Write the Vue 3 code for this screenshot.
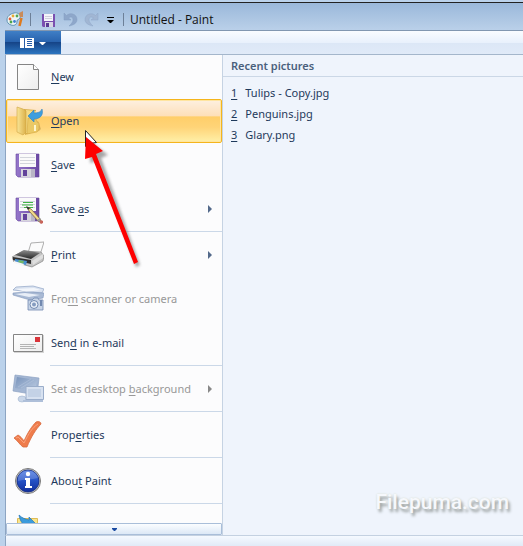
<script setup>
import { ref } from 'vue'

const current = ref('open')

const items = [
  { id: 'new', label: ['', 'N', 'ew'] },
  { id: 'open', label: ['', 'O', 'pen'] },
  { id: 'save', label: ['', 'S', 'ave'] },
  { id: 'saveas', label: ['Save ', 'a', 's'], more: true, line: true },
  { id: 'print', label: ['', 'P', 'rint'], more: true },
  { id: 'scanner', label: ['Fro', 'm', ' scanner or camera'], disabled: true },
  { id: 'email', label: ['Sen', 'd', ' in e-mail'], line: true },
  { id: 'desktop', label: ['Set as desktop ', 'b', 'ackground'], more: true, disabled: true, line: true },
  { id: 'properties', label: ['Prop', 'e', 'rties'], line: true },
  { id: 'about', label: ['Abou', 't', ' Paint'], line: true },
  { id: 'exit', label: ['', '', ''] },
]

const recent = ['Tulips - Copy.jpg', 'Penguins.jpg', 'Glary.png']
</script>

<template>
  <div class="window">
    <header class="titlebar">
      <svg class="logo" width="18" height="18" viewBox="0 0 18 18">
        <path d="M1 10C1 6 4 4 8 3c4-1 7 2 6 5-1 2-3 1-3 3 0 4-3 5-6 4-3-1-4-3-4-5z" fill="#eef5f8" stroke="#5f93b0" />
        <circle cx="4" cy="9" r="1.400" fill="#e2603a" /><circle cx="7" cy="6" r="1.400" fill="#e8ac32" />
        <circle cx="11" cy="6" r="1.400" fill="#54a954" /><circle cx="5" cy="12" r="1.400" fill="#4aa64a" />
        <circle cx="8.500" cy="11.500" r="1.400" fill="#3f7fd0" />
        <path d="M15.500 8l-2 8" stroke="#df7a1e" stroke-width="2.500" /><path d="M14 7l-1-4 4-2v6z" fill="#c98b5a" />
      </svg>
      <span class="bar"></span>
      <button class="tool" aria-label="Save">
        <svg width="16" height="16" viewBox="0 0 16 16">
          <path d="M2 2h13v13H3l-1-1z" fill="#7a50b0" /><path d="M4 2h9v7H4z" fill="#f4f4fa" />
          <path d="M5 4.500h7M5 6.500h7" stroke="#cfcfdc" />
          <path d="M5 10h8v5H5z" fill="#d9d6e4" /><path d="M6 11h3v4H6z" fill="#5b3b94" />
        </svg>
      </button>
      <button class="tool" aria-label="Undo">
        <svg width="16" height="16" viewBox="0 0 16 16">
          <path d="M2 1v7h7L6.500 6C9 4 11 5 11 8c0 2-2 4-4 6 5-1 8-3 8-6.500C15 2 8 0 4.500 3.500z" fill="#8ea7ca" stroke="#829cc1" stroke-width=".5" />
        </svg>
      </button>
      <button class="tool" aria-label="Redo">
        <svg width="16" height="16" viewBox="0 0 16 16">
          <path d="M14 1v7H7l2.500-2C7 4 5 5 5 8c0 2 2 4 4 6-5-1-8-3-8-6.500C1 2 8 0 11.500 3.500z" fill="#a1b6d3" stroke="#8fa7c8" stroke-width=".5" />
        </svg>
      </button>
      <button class="tool customize" aria-label="Customize toolbar">
        <svg width="8" height="8" viewBox="0 0 8 8"><path d="M0 1h7v1H0z" /><path d="M0 4h7L4 7H3z" /></svg>
      </button>
      <span class="bar"></span>
      <h1>Untitled - Paint</h1>
    </header>

    <div class="tabs">
      <button class="app-button" aria-label="Paint menu">
        <svg width="28" height="12" viewBox="0 0 28 12">
          <path d="M1 1h14v10H1z" fill="#fff" /><path d="M5 1h1v10H5z" fill="#275ca8" />
          <path d="M8 3h5M8 5h5M8 7h5M8 9h5" stroke="#275ca8" transform="translate(0 -.5)" />
          <path d="M20 5h7l-3 3h-1z" fill="#fff" />
        </svg>
      </button>
    </div>

    <main class="panel">
      <nav class="menu">
        <div class="items">
          <button
            v-for="item in items"
            :key="item.id"
            class="item"
            :class="{ active: current === item.id, line: item.line }"
            :disabled="item.disabled"
            @mouseenter="current = item.id"
          >
            <svg class="icon" width="32" height="32" viewBox="0 0 32 32">
              <defs>
                <linearGradient id="violet" x2="1"><stop stop-color="#9577cb" /><stop offset="1" stop-color="#6b48a3" /></linearGradient>
                <linearGradient id="folder" x2="1"><stop stop-color="#f9e596" /><stop offset="1" stop-color="#dcb14a" /></linearGradient>
                <linearGradient id="paper" x2="1" y2="1"><stop stop-color="#fff" /><stop offset="1" stop-color="#ededed" /></linearGradient>
                <linearGradient id="info" y2="1" x2="0"><stop stop-color="#4c7ae4" /><stop offset=".5" stop-color="#2450c4" /><stop offset="1" stop-color="#122f9c" /></linearGradient>
                <linearGradient id="steel" x2="1" y2="1"><stop stop-color="#7893bb" /><stop offset="1" stop-color="#c0cfe4" /></linearGradient>
                <linearGradient id="dark" x2="0" y2="1"><stop stop-color="#8e8e8e" /><stop offset="1" stop-color="#272727" /></linearGradient>
              </defs>

              <g v-if="item.id === 'new'">
                <path d="M5.500 3.500h16l5 5v20h-21z" fill="url(#paper)" stroke="#858585" />
                <path d="M21.500 3.500v5h5" fill="#fff" stroke="#858585" />
              </g>

              <g v-else-if="item.id === 'open'">
                <path d="M15 29l12-3 2-2-3-8-10 8z" fill="#8a6a20" opacity=".3" />
                <path d="M12 4l12 1v21l-11 4z" fill="#d9b04d" />
                <path d="M14 5l10 1v20l-10 2z" fill="#f5da83" />
                <path d="M5 2l6 2 3 2v21l-3 3-6-3z" fill="url(#folder)" stroke="#cfa443" stroke-width=".6" />
                <path d="M16 13l8 1 1 3 2 1v6l-2 3-10 2z" fill="#ebc966" stroke="#d0a23c" stroke-width=".5" />
                <path d="M22 20h2v6h-2z" fill="#fff6cc" />
                <path d="M16 11l6-6v3c4 0 7-1 8-4 2 7-3 10-8 10v3z" fill="#3d9ede" stroke="#2d80bf" stroke-width=".6" />
              </g>

              <g v-else-if="item.id === 'save' || item.id === 'saveas'">
                <path d="M4 5h23v23H6l-2-2z" fill="url(#violet)" stroke="#67469c" stroke-width=".6" />
                <path d="M7 5h17v13H7z" fill="#fafafa" />
                <path d="M8 8.500h15M8 11.500h15M8 14.500h15" stroke="#d3d5dc" />
                <path d="M9 20h14v8H9z" fill="#d7d5dd" /><path d="M11 21h4v6h-4z" fill="#63439b" /><path d="M19 20h4v8h-4z" fill="#b9b5c6" />
                <g v-if="item.id === 'saveas'">
                  <path d="M11 9.500h10M10 12h11M12 14.500h9" stroke="#3fb544" />
                  <path d="M15 14l4 2 10 11-2 2-10-11z" fill="#f2d98a" stroke="#745c33" stroke-width=".7" />
                  <path d="M14 13l2 4 2-2z" fill="#333" />
                  <path d="M27 29l2-2 2 1v2l-2 1z" fill="#c8655b" /><path d="M25 27l3-2 1 1-2 3z" fill="#999" />
                </g>
              </g>

              <g v-else-if="item.id === 'print'">
                <path d="M16 14l3-10 13-1-4 13z" fill="#fbfbfb" stroke="#9b9b9b" stroke-width=".8" />
                <path d="M0 18l11-6 18 1 3 4-1 5-11 6L2 23z" fill="#c4c4c4" stroke="#777" stroke-width=".6" />
                <path d="M3 16l9-5 16 3-9 6z" fill="url(#dark)" />
                <path d="M1 18l18 3v4L1 21z" fill="#303030" />
                <path d="M20 22l11-7v4l-10 7z" fill="#dedede" />
                <path d="M3 20l12 2-1 4-11-3z" fill="#4a91d2" /><path d="M7 21l5 1-1 3-5-2z" fill="#70b767" />
                <path d="M2 22l10 3-1 2-9-3z" fill="#f7f7f7" />
              </g>

              <g v-else-if="item.id === 'scanner'">
                <path d="M1 7l3-3 17-1 11 3-2 4z" fill="#d9e2f0" stroke="#91a5c5" stroke-width=".7" />
                <path d="M4 6l18-1 7 2-15 2z" fill="#f3f6fb" />
                <path d="M1 10l12-1 19 1-1 5-13 2L1 12z" fill="#a8b9d4" stroke="#8399bd" stroke-width=".6" />
                <path d="M3 11l10-1 15 2-11 2z" fill="#e8eef7" />
                <path d="M16 17h4l2-2h4l1 2h4v10H16z" fill="#c7d4e7" stroke="#7189b0" stroke-width=".8" />
                <circle cx="22" cy="21.500" r="4" fill="#e9eff7" stroke="#7189b0" /><circle cx="22" cy="21.500" r="2" fill="#849bbf" />
                <path d="M28 17h2v6h-2z" fill="#7289b0" />
              </g>

              <g v-else-if="item.id === 'email'">
                <path d="M2 8h30v18H2z" fill="#d5d5d5" />
                <path d="M1.500 7.500h29v17h-29z" fill="url(#paper)" stroke="#858585" />
                <path d="M23 10h5v5h-5z" fill="#d9343a" />
                <path d="M8 17.500h16M8 19.500h14M8 21.500h16" stroke="#b4b4b4" />
              </g>

              <g v-else-if="item.id === 'desktop'">
                <path d="M3 2l24 3-2 17-24-4z" fill="#a3b6d3" stroke="#8ca2c3" stroke-width=".7" />
                <path d="M5 4l20 3-2 12-20-4z" fill="url(#steel)" />
                <path d="M6 14l13-8M9 15l13-8" stroke="#b8c8df" opacity=".5" />
                <ellipse cx="10" cy="26" rx="4" ry="3" fill="#cad7e9" stroke="#a0b3cf" stroke-width=".6" />
                <path d="M14 13.500h17.500v13H14z" fill="#d7e1f0" stroke="#9aadca" />
                <path d="M16 16h13v8H16z" fill="#c4d2e6" />
                <path d="M11 27h20v2H11z" fill="#aebfd9" />
              </g>

              <g v-else-if="item.id === 'properties'">
                <path d="M2 19l4-3c2 1 4 3 6 6C16 13 20 7 24 3c3-1 5 0 5 2-5 5-10 13-14 23h-4C8 26 6 22 2 19z" fill="#ef7c4c" stroke="#d76a3e" stroke-width=".8" />
                <path d="M4 19l2-1 6 6C17 14 20 9 26 5" fill="none" stroke="#f9a27c" />
              </g>

              <g v-else-if="item.id === 'about'">
                <circle cx="16" cy="16" r="12.500" fill="#c8c8c8" stroke="#7b7b7b" />
                <circle cx="16" cy="16" r="11" fill="url(#info)" stroke="#152c83" stroke-width=".8" />
                <path d="M6 13C8 3 24 3 26 13c-6 2-14 1-20 3z" fill="#fff" opacity=".18" />
                <circle cx="16" cy="9" r="2.200" fill="#fff" />
                <path d="M13 13h5v8h2v2h-7v-2h1v-6h-1z" fill="#fff" />
              </g>

              <g v-else>
                <path d="M5.500 7.500h20v23h-20z" fill="#f8e48c" stroke="#dfbd55" />
                <path d="M7 4c3 3 6 4 10 5V6l7 7-8 5v-3C11 15 8 10 7 4z" fill="#3b9bdc" stroke="#2374b7" stroke-width=".7" />
              </g>
            </svg>
            <span class="text">{{ item.label[0] }}<u>{{ item.label[1] }}</u>{{ item.label[2] }}</span>
            <svg v-if="item.more" class="more" width="4" height="8" viewBox="0 0 4 8"><path d="M0 0l4 4-4 4z" fill="currentColor" /></svg>
          </button>
        </div>
        <button class="scroll-down" aria-label="More commands">
          <svg width="5" height="3" viewBox="0 0 5 3"><path d="M0 0h5v1L3 3H2L0 1z" fill="#1949a0" /></svg>
        </button>
      </nav>

      <section class="recent">
        <h2>Recent pictures</h2>
        <ol>
          <li v-for="(file, i) in recent" :key="file">
            <a href="#"><u>{{ i + 1 }}</u><span>{{ file }}</span></a>
          </li>
        </ol>
      </section>
    </main>

    <footer class="ribbon-edge"></footer>

    <svg class="pointer" width="70" height="145" viewBox="0 0 70 145">
      <defs><filter id="soft" x="-30%" width="160%"><feGaussianBlur stdDeviation="1.500" /></filter></defs>
      <g transform="translate(5 4)" fill="#777" opacity=".65" filter="url(#soft)">
        <path d="M5 8l17 13-7 3 39 107-4 2-39-106-7 2z" />
      </g>
      <path d="M4.500.500v16l4-3 7-1z" fill="#fff" stroke="#222" />
      <path d="M5 7l17 14-7 3 42 108-4 2L11 27l-7 2z" fill="#fe0000" />
    </svg>
    <span class="watermark">Filepuma.com</span>
  </div>
</template>

<style>
body {
  margin: 0;
}
</style>

<style scoped>
* {
  box-sizing: border-box;
}

.window {
  position: relative;
  display: flex;
  flex-direction: column;
  height: 100vh;
  padding-top: 2px;
  overflow: hidden;
  background: #bbd2eb;
  font: 11px/16px "Noto Sans", "Open Sans", sans-serif;
  color: #1e395b;
}

button {
  padding: 0;
  border: 0;
  background: none;
  font: inherit;
  color: inherit;
}

svg {
  display: block;
  flex: none;
}

.titlebar {
  display: flex;
  align-items: center;
  height: 28px;
  flex: none;
  padding: 6px 0 0 6px;
  border-top: 1px solid #222;
  background: linear-gradient(#9ab8da, #bad0e9);
}

.logo {
  margin-bottom: 2px;
}

.bar {
  width: 1px;
  height: 13px;
  margin: 0 9px 0 6px;
  background: #6d8098;
}

.tool {
  margin-right: 6px;
}

.customize {
  margin: 0 2px 0 1px;
}

.customize + .bar {
  margin-right: 6px;
}

h1 {
  margin: 0;
  padding-top: 1px;
  font: 12px/16px "Open Sans", "Noto Sans", sans-serif;
  color: #111;
}

.tabs {
  height: 25px;
  flex: none;
  margin-left: 5px;
  border-top: 1px solid #8297b0;
  border-bottom: 1px solid #a4b6cb;
  background: linear-gradient(#fafcff, #e9f1fc 50%, #dce7f6 51%, #e0eaf8);
}

.app-button {
  display: flex;
  align-items: center;
  width: 56px;
  height: 23px;
  padding-left: 14px;
  background: linear-gradient(#3f7fc6, #2862ad 48%, #164588 50%, #2c75c0);
}

.panel {
  display: flex;
  flex: 1;
  min-height: 0;
  margin-left: 5px;
  border-left: 1px solid #8da5c2;
  border-bottom: 1px solid #c4d1e1;
  background: #eff4fc;
}

.menu {
  display: flex;
  flex-direction: column;
  width: 217px;
  flex: none;
  border-right: 1px solid #c6d3e3;
  background: #fcfcfd;
}

.items {
  flex: 1;
  overflow: hidden;
}

.item {
  position: relative;
  display: flex;
  align-items: center;
  width: 100%;
  height: 44px;
  padding: 0 10px 0 6px;
  text-align: left;
}

.item.line {
  height: 46px;
  padding-bottom: 2px;
}

.item.line::after {
  content: "";
  position: absolute;
  right: 0;
  bottom: 1px;
  left: 44px;
  height: 1px;
  background: #cbd8e8;
}

.item.active {
  border: 1px solid #f5b51c;
  border-radius: 2px;
  padding: 0 9px 0 5px;
  background: linear-gradient(#fdf0e0, #fddfb9 38%, #ffce69 40%, #ffd478 65%, #fff0a8);
  box-shadow: inset 0 0 0 1px #ffe5a0;
}

.item:disabled {
  color: #989898;
}

.text {
  flex: 1;
  margin-left: 7px;
  white-space: nowrap;
}

u {
  text-underline-offset: 2px;
}

.more {
  color: #53698a;
}

.item:disabled .more {
  color: #888;
}

.scroll-down {
  display: flex;
  align-items: center;
  justify-content: center;
  height: 12px;
  flex: none;
  border: 1px solid #a9bed9;
  border-radius: 1px;
  background: linear-gradient(#fbfdff, #dce8f6);
}

.recent {
  flex: 1;
}

h2 {
  margin: 0;
  padding: 3px 8px 2px;
  border-bottom: 1px solid #cbd7e6;
  font-size: 11px;
  line-height: 16px;
  font-weight: 600;
  color: #4a607c;
}

ol {
  margin: 0;
  padding: 5px 8px;
  list-style: none;
}

li a {
  display: flex;
  gap: 8px;
  line-height: 21px;
  color: inherit;
  text-decoration: none;
}

.ribbon-edge {
  height: 10px;
  flex: none;
  margin-left: 5px;
  border-left: 1px solid #8da5c2;
  background: linear-gradient(#f5f9ff, #e1eaf7);
}

.pointer {
  position: absolute;
  top: 130px;
  left: 81px;
  pointer-events: none;
}

.watermark {
  position: absolute;
  right: 14px;
  bottom: 30px;
  font: 500 21px/28px Roboto, "Liberation Sans", sans-serif;
  color: #f6f8fc;
  text-shadow: 2px 3px 3px #969c9c, 0 0 2px #d7ddcf;
}
</style>
